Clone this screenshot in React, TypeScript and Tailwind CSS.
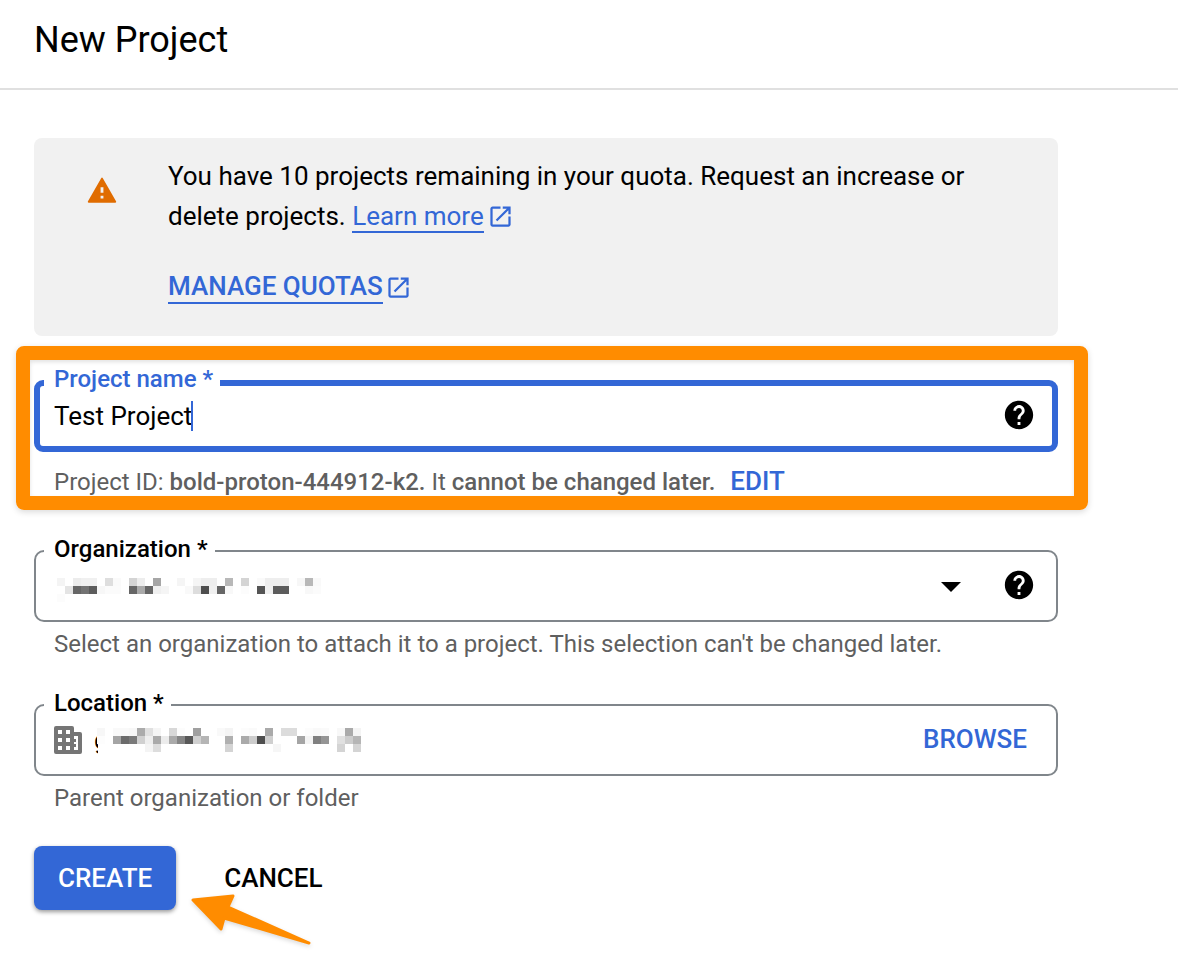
import { useId } from "react";
import type { ReactNode } from "react";

type Cell = [column: number, row: number, shade: string];

const organizationCells: Cell[] = [
  [0, 0, "#f4f4f4"], [2, 0, "#ececec"], [3, 0, "#f0f0f0"], [4, 0, "#f0f0f0"], [6, 0, "#dedede"], [7, 0, "#fafafa"],
  [9, 0, "#d4d4d4"], [10, 0, "#ededed"], [12, 0, "#a6a6a6"], [15, 0, "#f5f5f5"], [17, 0, "#f5f5f5"], [18, 0, "#eeeeee"],
  [19, 0, "#eeeeee"], [21, 0, "#b8b8b8"], [23, 0, "#d4d4d4"], [25, 0, "#fafafa"], [26, 0, "#eeeeee"], [27, 0, "#eeeeee"],
  [28, 0, "#eeeeee"], [30, 0, "#f7f7f7"], [31, 0, "#b8b8b8"], [32, 0, "#f9f9f9"],
  [1, 1, "#e4e4e4"], [2, 1, "#666666"], [3, 1, "#737373"], [4, 1, "#5c5c5c"], [5, 1, "#f7f7f7"], [6, 1, "#fbfbfb"],
  [7, 1, "#fbfbfb"], [9, 1, "#666666"], [10, 1, "#aaaaaa"], [11, 1, "#666666"], [12, 1, "#f0f0f0"], [13, 1, "#f5f5f5"],
  [16, 1, "#f9f9f9"], [17, 1, "#dddddd"], [18, 1, "#4e4e4e"], [19, 1, "#f0f0f0"], [20, 1, "#666666"], [21, 1, "#f8f8f8"],
  [23, 1, "#fcfcfc"], [25, 1, "#555555"], [26, 1, "#f0f0f0"], [27, 1, "#5c5c5c"], [28, 1, "#5c5c5c"], [31, 1, "#f8f8f8"],
  [32, 1, "#fbfbfb"], [0, 2, "#fcfcfc"],
];

const locationCells: Cell[] = [
  [0, 0, "#f7f7f7"], [2, 0, "#f9f9f9"], [3, 0, "#f9f9f9"], [4, 0, "#f7f7f7"], [5, 0, "#ababab"], [6, 0, "#e0e0e0"],
  [7, 0, "#f5f5f5"], [9, 0, "#d8d8d8"], [10, 0, "#fcfcfc"], [12, 0, "#a0a0a0"], [15, 0, "#f9f9f9"], [16, 0, "#f4f4f4"],
  [18, 0, "#fcfcfc"], [19, 0, "#fafafa"], [21, 0, "#aaaaaa"], [23, 0, "#dcdcdc"], [24, 0, "#dcdcdc"], [26, 0, "#fcfcfc"],
  [27, 0, "#f9f9f9"], [28, 0, "#fafafa"], [30, 0, "#f8f8f8"], [31, 0, "#aaaaaa"], [32, 0, "#f4f4f4"],
  [0, 1, "#fdfdfd"], [2, 1, "#a5a5a5"], [3, 1, "#6b6b6b"], [4, 1, "#7a7a7a"], [5, 1, "#d0d0d0"], [6, 1, "#eeeeee"],
  [7, 1, "#aaaaaa"], [8, 1, "#ececec"], [9, 1, "#aaaaaa"], [10, 1, "#858585"], [11, 1, "#585858"], [12, 1, "#d0d0d0"],
  [13, 1, "#b5b5b5"], [16, 1, "#b0b0b0"], [18, 1, "#aaaaaa"], [19, 1, "#cccccc"], [20, 1, "#4e4e4e"], [21, 1, "#cfcfcf"],
  [25, 1, "#a5a5a5"], [26, 1, "#f4f4f4"], [27, 1, "#808080"], [28, 1, "#959595"], [30, 1, "#e0e0e0"], [31, 1, "#cccccc"],
  [32, 1, "#b5b5b5"], [6, 2, "#f4f4f4"], [7, 2, "#dddddd"], [16, 2, "#d4d4d4"], [22, 2, "#f6f6f6"], [30, 2, "#d4d4d4"], [32, 2, "#d4d4d4"],
];

function Mosaic({ cells, label }: { cells: Cell[]; label: string }) {
  return (
    <svg width="272" height="24" viewBox="0 0 272 24" role="img" aria-label={label} shapeRendering="crispEdges" className="shrink-0">
      {cells.map(([column, row, shade]) => (
        <rect key={`${column}-${row}`} x={column * 8} y={row * 8} width="8" height="8" fill={shade} />
      ))}
    </svg>
  );
}

function OpenIcon() {
  return (
    <svg width="27" height="27" viewBox="0 0 24 24" fill="currentColor" aria-hidden="true" className="inline-block shrink-0">
      <path d="M19 19H5V5h7V3H5c-1.11 0-2 .9-2 2v14c0 1.1.89 2 2 2h14c1.1 0 2-.9 2-2v-7h-2v7zM14 3v2h3.59l-9.83 9.83 1.41 1.41L19 6.41V10h2V3h-7z" />
    </svg>
  );
}

function HelpButton({ label }: { label: string }) {
  return (
    <button type="button" aria-label={label} className="mb-0.5 size-8 text-black">
      <svg width="34" height="34" viewBox="0 0 24 24" fill="currentColor" aria-hidden="true" className="-m-px">
        <path d="M12 2C6.48 2 2 6.48 2 12s4.48 10 10 10 10-4.48 10-10S17.52 2 12 2zm1 17h-2v-2h2v2zm2.07-7.75l-.9.92C13.45 12.9 13 13.5 13 15h-2v-.5c0-1.1.45-2.1 1.17-2.83l1.24-1.26c.37-.36.59-.86.59-1.41 0-1.1-.9-2-2-2s-2 .9-2 2H8c0-2.21 1.79-4 4-4s4 1.79 4 4c0 .88-.36 1.68-.93 2.25z" />
      </svg>
    </button>
  );
}

function Outline({ label, htmlFor, active = false, children }: { label: string; htmlFor: string; active?: boolean; children: ReactNode }) {
  return (
    <div className="relative flex h-[72px] items-center pr-[23px] pl-5">
      <div
        className={
          active
            ? "pointer-events-none absolute inset-0 rounded-[9px] border-6 border-[#3367d6]"
            : "pointer-events-none absolute inset-0 rounded-[10px] border-2 border-[#80868b]"
        }
      />
      <label
        htmlFor={htmlFor}
        className={
          active
            ? "absolute -top-[17px] left-[10px] bg-white pr-[7px] pl-[10px] text-2xl/8 font-medium text-[#3367d6]"
            : "absolute -top-[17px] left-[10px] bg-white pr-[7px] pl-[10px] text-2xl/8 font-medium text-black"
        }
      >
        {label}
      </label>
      {children}
    </div>
  );
}

export default function App() {
  const id = useId();
  return (
    <div className="min-h-screen bg-white font-[Roboto,sans-serif] text-black">
      <header className="border-b-2 border-[#e0e0e0] px-[34px] pt-4 pb-6">
        <h1 className="text-4xl/12 font-normal">New Project</h1>
      </header>

      <main className="mr-[120px] ml-[34px] pt-12">
        <section className="flex rounded-lg bg-[#f1f1f1] pt-[18px] pr-20 pb-8 pl-[51px] text-[26px]/10">
          <svg width="34" height="34" viewBox="0 0 24 24" fill="#e06c00" aria-hidden="true" className="mt-[17px] mr-[49px] shrink-0">
            <path d="M2.6 21h18.8c.5 0 .8-.5.5-1L12.6 3.7a.7.7 0 0 0-1.2 0L2.1 20c-.3.5 0 1 .5 1zM13 18h-2v-2h2v2zm0-4h-2v-4h2v4z" />
          </svg>
          <div>
            <p>
              You have 10 projects remaining in your quota. Request an increase or delete projects.{" "}
              <a href="#learn-more" className="whitespace-nowrap text-[#3367d6]">
                <span className="border-b-2 border-[#3367d6]">Learn more</span>
                <span className="ml-[3px] inline-flex h-7 align-[-5px]"><OpenIcon /></span>
              </a>
            </p>
            <a href="#quotas" className="mt-[34px] flex items-center gap-0.5 font-medium text-[#3367d6]">
              <span className="border-b-2 border-[#3367d6] leading-8">MANAGE QUOTAS</span>
              <OpenIcon />
            </a>
          </div>
        </section>

        <form onSubmit={(event) => event.preventDefault()}>
          <div className="relative mt-11">
            <Outline label="Project name *" htmlFor={`${id}-name`} active>
              <input
                id={`${id}-name`}
                type="text"
                defaultValue="Test Project"
                className="field-sizing-content min-w-0 text-[26px]/8 outline-none"
              />
              <span className="-ml-px h-[30px] w-0.5 shrink-0 bg-[#3367d6]" aria-hidden="true" />
              <span className="grow" />
              <HelpButton label="About project name" />
            </Outline>
            <p className="mt-[14px] px-5 text-2xl/8 text-[#5f5f5f]">
              Project ID: <b className="font-medium">bold-proton-444912-k2.</b> It{" "}
              <b className="font-medium">cannot be changed later.</b>
              <button type="button" className="ml-[15px] text-[26px]/6 font-medium text-[#3367d6]">EDIT</button>
            </p>
            <div className="pointer-events-none absolute -top-[34px] -right-[30px] -bottom-3 -left-[18px] rounded-lg border-14 border-[#ff8c00] shadow-[0_2px_6px_rgba(0,0,0,0.15),inset_0_2px_4px_rgba(0,0,0,0.12)]" />
          </div>

          <div className="mt-[52px]">
            <Outline label="Organization *" htmlFor={`${id}-org`}>
              <button id={`${id}-org`} type="button" aria-haspopup="listbox" className="flex grow items-center justify-between pt-[7px] pr-[42px] pl-[3px]">
                <Mosaic cells={organizationCells} label="Organization name" />
                <svg width="20" height="10" viewBox="0 0 20 10" aria-hidden="true" className="mb-1.5">
                  <path d="M0 0h20L10 10z" />
                </svg>
              </button>
              <HelpButton label="About organization" />
            </Outline>
            <p className="mt-1.5 px-5 text-2xl/8 text-[#5f5f5f]">
              Select an organization to attach it to a project. This selection can't be changed later.
            </p>
          </div>

          <div className="mt-11">
            <Outline label="Location *" htmlFor={`${id}-browse`}>
              <svg width="28" height="28" viewBox="0 0 28 28" aria-hidden="true" className="shrink-0" fill="#757575">
                <path
                  fillRule="evenodd"
                  d="M2 0h16a2 2 0 0 1 2 2v4h6a2 2 0 0 1 2 2v18a2 2 0 0 1-2 2H2a2 2 0 0 1-2-2V2a2 2 0 0 1 2-2zM4 4v4h4V4zM12 4v4h4V4zM4 12v4h4v-4zM12 12v4h4v-4zM4 20v4h4v-4zM12 20v4h4v-4zM20 10v3h2v3h-2v2h2v3h-2v3h4V10z"
                />
              </svg>
              <span className="ml-3 w-1 overflow-hidden text-[26px]/8">g</span>
              <span className="-ml-px flex"><Mosaic cells={locationCells} label="Location name" /></span>
              <span className="grow" />
              <button id={`${id}-browse`} type="button" className="mr-2 mb-0.5 text-[26px]/8 font-medium text-[#3367d6]">BROWSE</button>
            </Outline>
            <p className="mt-1.5 px-5 text-2xl/8 text-[#5f5f5f]">Parent organization or folder</p>
          </div>

          <div className="relative mt-8 flex items-center gap-6 text-[26px]/8 font-medium">
            <button type="submit" className="h-16 rounded-lg bg-[#3367d6] px-6 text-white shadow-[0_2px_4px_rgba(0,0,0,0.4)]">CREATE</button>
            <button type="button" className="h-16 px-6">CANCEL</button>
            <svg width="124" height="56" viewBox="190 892 124 56" aria-hidden="true" className="absolute top-[46px] left-[156px] overflow-visible drop-shadow-[0_2px_2px_rgba(0,0,0,0.15)]">
              <path d="M193 900L233 896L228 907L309 943L224 918L221 929Z" fill="#ff8c00" stroke="#ff8c00" strokeWidth="3" strokeLinejoin="round" />
            </svg>
          </div>
        </form>
      </main>
    </div>
  );
}
